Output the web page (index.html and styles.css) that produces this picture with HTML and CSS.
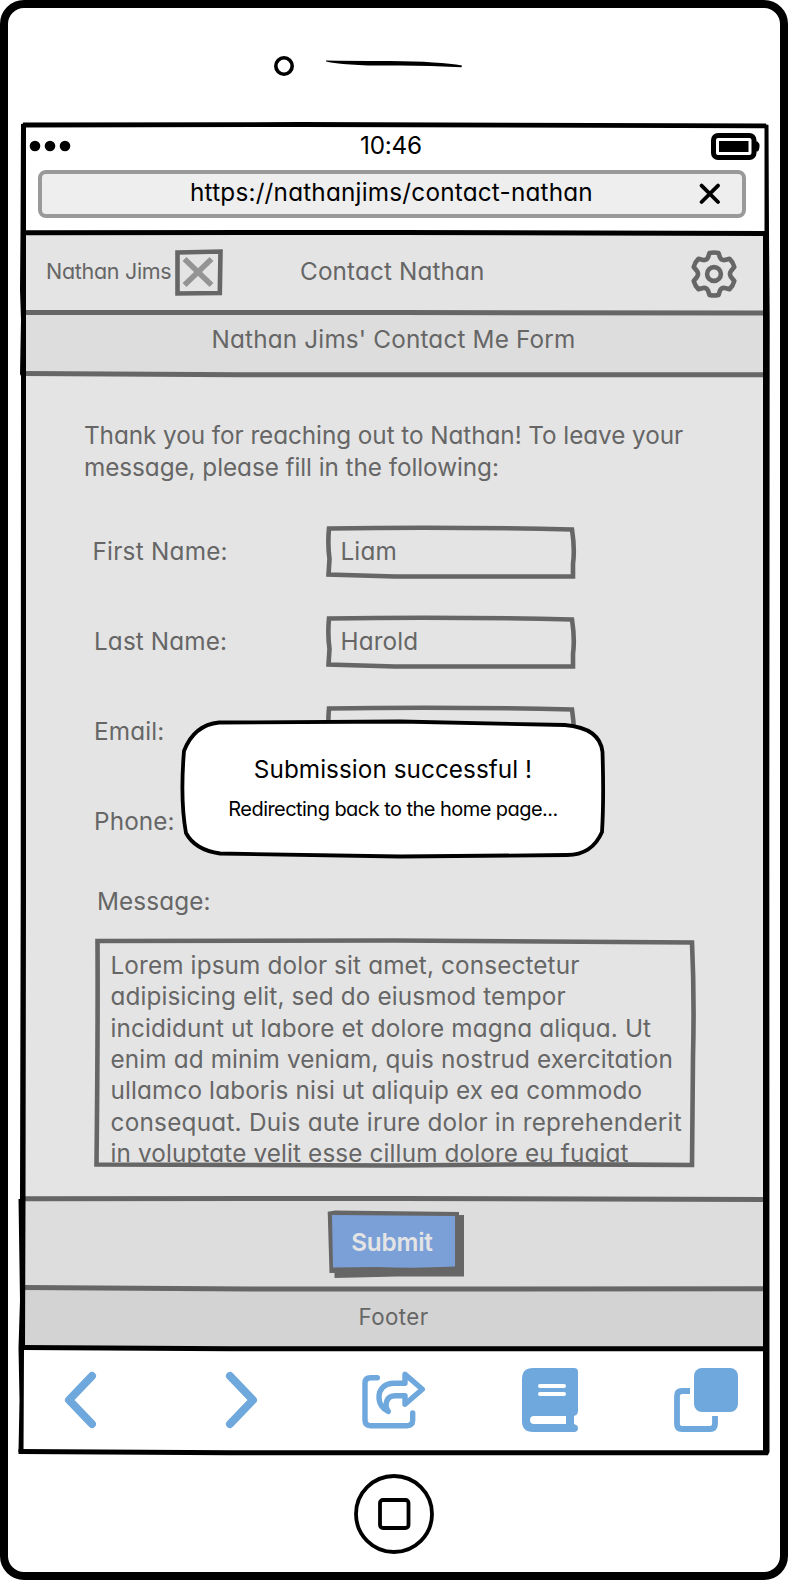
FILE: index.html
```html
<!DOCTYPE html>
<html lang="en">
<head>
<meta charset="utf-8">
<title>Contact Nathan</title>
<link rel="stylesheet" href="styles.css">
</head>
<body>
<div class="phone">
  <div class="bezel bezel-top">
    <svg width="200" height="30" viewBox="270 50 200 30">
      <circle cx="284" cy="66" r="8.2" fill="none" stroke="#000" stroke-width="3.6"/>
      <path d="M326 60.600Q345 61 390 61Q440 61.500 462 65.500L461.500 67.200Q430 65.800 400 65.500Q345 66 326 61.400Z"/>
    </svg>
  </div>

  <div class="screen">
    <div class="browser-top">
      <div class="status">
        <svg class="dots" width="44" height="12" viewBox="0 0 44 12"><circle cx="6" cy="6" r="5.300"/><circle cx="21" cy="6" r="5.300"/><circle cx="36" cy="6" r="5.300"/></svg>
        <span class="clock">10:46</span>
        <svg class="battery" width="50" height="28" viewBox="0 0 50 28">
          <rect x="2.500" y="2.500" width="40.500" height="22" rx="4.500" fill="none" stroke="#000" stroke-width="5"/>
          <path d="M45 8.500h1.500q2 1.500 2 5t-2 5H45z"/><rect x="8" y="8" width="29.500" height="11"/>
        </svg>
      </div>
      <div class="address">
        <span class="url">https://nathanjims/contact-nathan</span>
        <svg class="stop" width="22" height="22" viewBox="0 0 22 22"><path d="M2.600 2.600L19 19M19 2.600L2.600 19" fill="none" stroke="#000" stroke-width="3.800" stroke-linecap="round"/></svg>
      </div>
    </div>

    <header class="header">
      <span class="brand">Nathan Jims</span>
      <svg class="logo" width="48" height="48" viewBox="0 0 48 48">
        <path d="M2.500 3.500L45.500 2.500L44.800 44L2.500 44.500Z" fill="none" stroke="#666" stroke-width="4.600"/>
        <path d="M9.500 10L36.500 36M36.500 10L9.500 36" fill="none" stroke="#949494" stroke-width="5.500"/>
      </svg>
      <span class="page-name">Contact Nathan</span>
      <svg class="gear" width="48" height="50" viewBox="0 0 48 50">
        <g fill="none" stroke="#666" stroke-width="4.600" stroke-linejoin="round">
          <path d="M19.500 3Q24 2 28.500 3L30 7.500Q31.500 10.500 35 10L39.500 8.800Q43 12 44.300 17L41 21Q39 24 41 27L44.300 31Q43 36 39.500 39.200L35 38Q31.500 37.500 30 40.500L28.500 45Q24 46 19.500 45L18 40.500Q16.500 37.500 13 38L8.500 39.200Q5 36 3.700 31L7 27Q9 24 7 21L3.700 17Q5 12 8.500 8.800L13 10Q16.500 10.500 18 7.500Z"/>
          <circle cx="24" cy="24" r="6.900"/>
        </g>
      </svg>
    </header>
    <h1 class="title">Nathan Jims' Contact Me Form</h1>

    <main class="content">
      <p class="intro">Thank you for reaching out to Nathan! To leave your<br>message, please fill in the following:</p>
      <div class="form">
        <div class="row"><label class="first">First Name:</label><div class="field"><svg class="sketch" width="252" height="56" viewBox="0 0 252 56"><use href="#box"/></svg>Liam</div></div>
        <div class="row"><label>Last Name:</label><div class="field"><svg class="sketch" width="252" height="56" viewBox="0 0 252 56"><use href="#box"/></svg>Harold</div></div>
        <div class="row"><label>Email:</label><div class="field"><svg class="sketch" width="252" height="56" viewBox="0 0 252 56"><use href="#box"/></svg></div></div>
        <div class="row"><label>Phone:</label></div>
      </div>
      <div class="message-label">Message:</div>
      <div class="message">
        <svg class="sketch" width="604" height="232" viewBox="0 0 604 232"><path d="M4.500 4L300 3.500L599 5.500Q601.500 60 600 120L599 228Q450 226.500 300 228.500L3.500 227.500Q5 90 4.500 4Z" fill="none" stroke="#666" stroke-width="4.600"/></svg>
        <div class="message-text"><div>Lorem ipsum dolor sit amet, consectetur</div><div>adipisicing elit, sed do eiusmod tempor</div><div>incididunt ut labore et dolore magna aliqua. Ut</div><div>enim ad minim veniam, quis nostrud exercitation</div><div>ullamco laboris nisi ut aliquip ex ea commodo</div><div class="wide">consequat. Duis aute irure dolor in reprehenderit</div><div>in voluptate velit esse cillum dolore eu fugiat</div></div>
      </div>
    </main>

    <div class="actions">
      <div class="submit">
        <svg class="sketch" width="138" height="70" viewBox="0 0 138 70">
          <path d="M7.500 8L137 6V67.500L70 67.500L7.500 69Z" fill="#666"/>
          <path d="M0.700 2.700L8 1.500L132 3V62L2.500 64Z" fill="#666"/>
          <path d="M5 6L128 7V57.500Q90 59.500 50 58L6 58.500Z" fill="#7ba0d8"/>
        </svg>
        <span>Submit</span>
      </div>
    </div>
    <footer class="footer">Footer</footer>

    <nav class="nav">
      <svg class="back" width="36" height="60" viewBox="0 0 36 60"><path d="M29 6L6 30L29 54" class="chev"/></svg>
      <svg class="forward" width="36" height="60" viewBox="0 0 36 60"><path d="M7 6L30 30L7 54" class="chev"/></svg>
      <svg class="share" width="66" height="60" viewBox="0 0 66 60">
        <g fill="none" stroke="#6fa8dc" stroke-width="5.400" stroke-linecap="round" stroke-linejoin="round">
          <path d="M15.300 7.800H8.500Q3 7.800 3 13.300V50Q3 55.700 8.500 55.700H45Q50.700 55.700 50.700 50V43"/>
          <path d="M43 4.300V13.200H32C22 13.200 17 20 17 27C17 34 21 39.500 26.300 41.500C21.500 34 25 25.800 33 25.800H43V34.300L60.300 19.300Z"/>
        </g>
      </svg>
      <svg class="book" width="58" height="66" viewBox="0 0 58 66">
        <path d="M12 1H53Q57 1 57 5V44Q57 48 53 49V57Q57 58 57 61Q57 65 53 65H12Q1 65 1 54V12Q1 1 12 1ZM13 49Q9 49 9 53T13 57H45V49Z" fill="#6fa8dc" fill-rule="evenodd"/>
        <path d="M19 19H43M19 27H43" stroke="#fff" stroke-width="4" stroke-linecap="round"/>
      </svg>
      <svg class="tabs" width="66" height="66" viewBox="0 0 66 66">
        <rect x="21" y="1" width="44" height="44" rx="8" fill="#6fa8dc"/>
        <path d="M17 24H9Q4 24 4 29V57Q4 62 9 62H37Q42 62 42 57V49" fill="none" stroke="#6fa8dc" stroke-width="5.800"/>
      </svg>
    </nav>

    <div class="toast" role="status">
      <svg class="sketch" width="430" height="144" viewBox="178 717 430 144"><path d="M219 722.500L400 721.500L565 725Q600 728 602.500 752Q604 800 602 832Q592 855 567 855L400 856.500L220 853.500Q195 850 186 833Q180 800 184 751Q194 725 219 722.500Z" fill="#fff" stroke="#000" stroke-width="3.800"/></svg>
      <strong>Submission successful !</strong>
      <span>Redirecting back to the home page...</span>
    </div>
  </div>

  <div class="bezel bezel-bottom">
    <svg width="84" height="84" viewBox="0 0 84 84" fill="none" stroke="#000"><circle cx="42" cy="42" r="38" stroke-width="3.800"/><rect x="28" y="28" width="28.500" height="28" rx="3" stroke-width="3.800"/></svg>
  </div>

  <svg class="frame" width="788" height="1580" viewBox="0 0 788 1580" fill="none">
    <defs><path id="box" d="M4 4.500Q120 2.500 247 5.500Q250 25 248 40L248 52.500Q150 52.500 70 52.500L3.500 50.500L4.500 35Q2.500 20 4 4.500Z" fill="none" stroke="#666" stroke-width="4.600"/></defs>
    <g stroke="#666" stroke-width="5">
      <path d="M24 312.500L400 312.500L766 313"/>
      <path d="M24 373.500L240 374.800L766 374.800"/>
      <path d="M24 1198.800L400 1198.500L766 1199.500"/>
      <path d="M24 1287.500L250 1289L766 1288.800"/>
    </g>
    <g stroke="#000" stroke-linejoin="round">
      <path d="M23 125L300 124.500L766 125.800" stroke-width="4.800"/>
      <path d="M22 232.800L400 232.500L766 233.500" stroke-width="5"/>
      <path d="M22 1347.500L230 1348.800L766 1348.800" stroke-width="5"/>
      <path d="M18.500 1451.500L230 1452.800L768 1452.800" stroke-width="5"/>
    </g>
    <path fill="#000" d="M21 124L26 123V900L25.500 1200L25 1348L24 1350L23.500 1452H18.500L19.500 1400L18.500 1348L20 1300L18.500 1199H20L20.700 900L21 376L20 374L21 320L20 290L20.500 233Z"/>
    <path fill="#000" d="M764.500 124L768.500 125L769 233L769.700 320L769.300 800L769.500 1452L768 1455H763V235H764.500Z"/>
  </svg>
</div>
</body>
</html>
```
FILE: styles.css
```css
* { box-sizing: border-box; }
body { margin: 0; background: #fff; }
svg { display: block; flex: none; }
.phone {
  position: relative;
  width: 788px; height: 1580px;
  border: 8px solid #000; border-radius: 24px;
  background: #fff; color: #666;
  font: 400 24.300px/32px Inter, "Open Sans", sans-serif;
  font-feature-settings: "cv11" 1;
  letter-spacing: 0.130px;
  white-space: nowrap;
}
.frame { position: absolute; left: -8px; top: -8px; pointer-events: none; }
.bezel { display: flex; justify-content: center; }
.bezel-top { height: 116px; padding: 42px 48px 0 0; }
.bezel-bottom { padding: 20px 0 0 0; }
.screen { position: relative; width: 742px; margin-left: 16px; }

.browser-top { height: 108px; padding: 0 20px 0 14px; color: #000; }
.status { display: grid; grid-template-columns: 1fr auto 1fr; align-items: center; height: 46px; margin: 0 -15px 0 -9px; padding-bottom: 3px; }
.dots { margin-top: 1px; }
.clock { margin-right: 8px; margin-top: -1px; letter-spacing: -0.200px; }
.battery { justify-self: end; margin-top: 2px; }
.address { display: flex; align-items: center; justify-content: space-between; height: 48px; padding: 0 21px 0 148px; border: 4px solid #999; border-radius: 8px; background: #eee; }
.url { margin-top: -4px; letter-spacing: 0.210px; }

.header { display: flex; align-items: center; height: 80px; padding: 0 28px 0 22px; background: #e4e4e4; }
.brand { width: 129px; margin-top: -2px; font-size: 21.500px; letter-spacing: -0.300px; }
.logo { margin-top: 2px; }
.page-name { flex: 1; margin: -2px 0 0 77px; }
.gear { margin-top: 6px; }
.title { height: 62px; margin: 0; padding: 11px 3px 0 0; text-align: center; font-size: inherit; font-weight: 400; letter-spacing: 0.170px; background: #ddd; }

.content { height: 824px; padding-top: 45px; background: #e4e4e4; }
.intro { margin: 0 0 0 60px; letter-spacing: -0.060px; }
.form { display: flex; flex-direction: column; gap: 34px; margin: 41px 0 0 70px; }
.row { display: flex; align-items: center; height: 56px; }
.row label { width: 231px; margin-top: -2px; }
.row .first { margin-left: -1.500px; width: 232.500px; letter-spacing: 0.250px; }
.field { position: relative; width: 252px; height: 56px; padding: 11px 0 0 15.500px; }
.sketch { position: absolute; left: 0; top: 0; }
.message-label { margin: 35px 0 0 73px; }
.message { position: relative; width: 604px; height: 232px; margin: 20px 0 0 69px; }
.message-text { height: 227px; padding: 13px 0 0 17.500px; overflow: hidden; line-height: 31.350px; }
.message-text .wide { letter-spacing: 0.250px; }

.actions { display: flex; justify-content: center; height: 90px; padding: 11px 0 0 2px; background: #ddd; }
.submit { position: relative; width: 138px; height: 70px; padding: 17px 8px 0 0; text-align: center; color: #e4e4e4; font-weight: 600; letter-spacing: -0.200px; }
.submit span { position: relative; }
.footer { height: 60px; padding: 13px 3px 0 0; text-align: center; font-size: 22.300px; letter-spacing: 0.400px; background: #d3d3d3; }

.nav { display: flex; align-items: center; height: 104px; padding-left: 39px; }
.forward { margin-left: 124px; }
.share { margin-left: 103px; }
.book { margin-left: 93px; }
.tabs { margin-left: 94px; }
.chev { fill: none; stroke: #6fa8dc; stroke-width: 8; stroke-linecap: round; stroke-linejoin: round; }

.toast { position: absolute; left: 154px; top: 593px; width: 430px; height: 144px; padding-top: 36px; display: flex; flex-direction: column; align-items: center; color: #000; }
.toast strong { position: relative; font-weight: 400; letter-spacing: 0.050px; }
.toast span { position: relative; margin-top: 8px; font-size: 20px; letter-spacing: -0.550px; }
```
